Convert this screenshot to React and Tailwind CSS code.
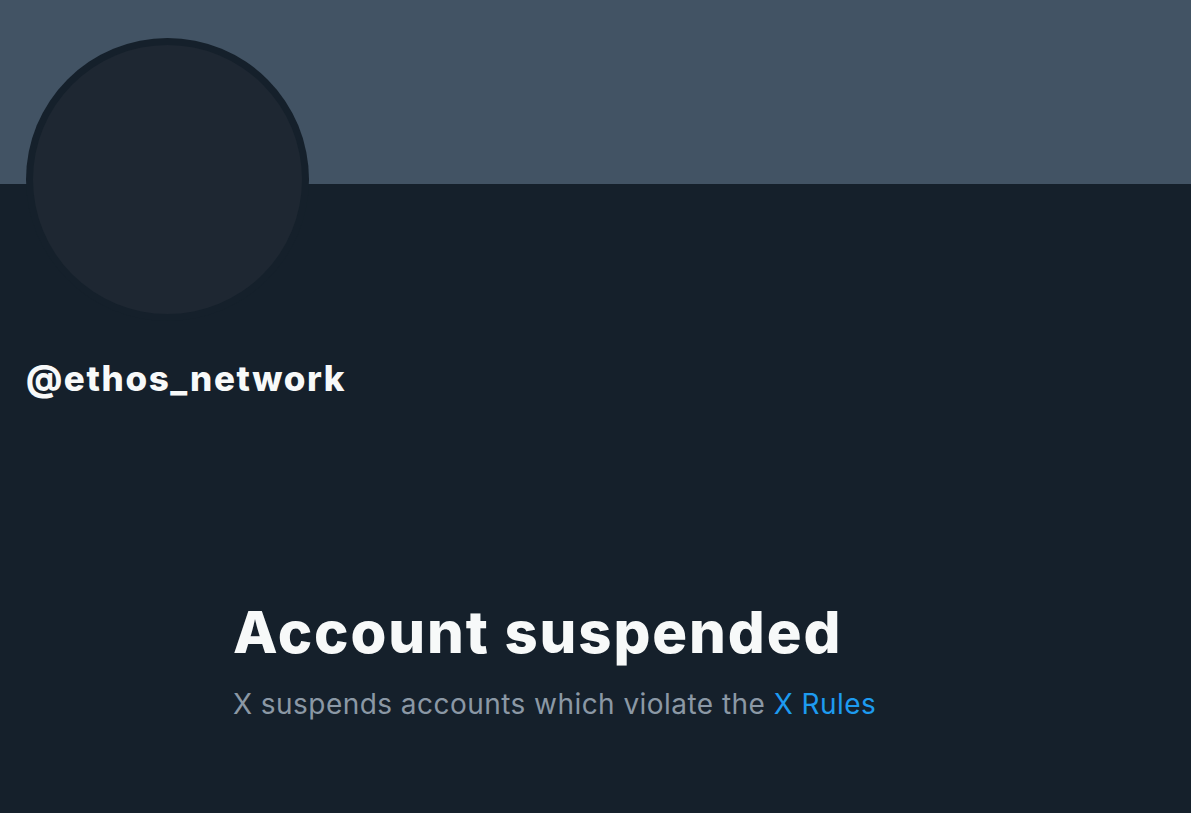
export default function App() {
  return (
    <div className="min-h-[813px] bg-[#15202b] font-['Inter',sans-serif] overflow-hidden">
      <div className="h-[184px] bg-[#425364]" />

      <div className="px-[26px]">
        <div className="-mt-[146px] w-[283px] h-[283px] rounded-full bg-[#15202b] p-[7px]">
          <div className="w-full h-full rounded-full bg-[#1e2732]" />
        </div>

        <h2 className="mt-[37px] text-[35px] leading-[40px] font-extrabold tracking-[1.6px] text-[#f7f9f9]">
          @ethos_network
        </h2>
      </div>

      <div className="pl-[233px] mt-[199px]">
        <h1 className="text-[58px] leading-[70px] font-extrabold tracking-[1.9px] text-[#f7f9f9]">
          Account suspended
        </h1>
        <p className="mt-[19px] text-[28px] leading-[36px] tracking-[0.45px] text-[#8b98a5]">
          X suspends accounts which violate the{" "}
          <a href="#" className="text-[#1d9bf0]">X Rules</a>
        </p>
      </div>
    </div>
  );
}
